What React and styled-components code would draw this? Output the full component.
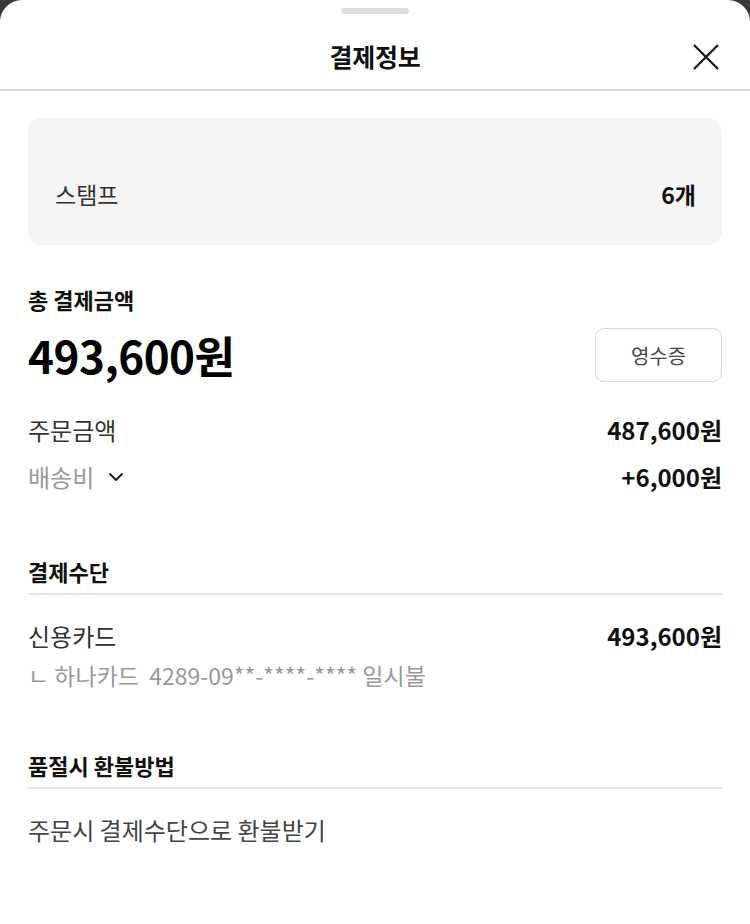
import React from "react";
import styled, { createGlobalStyle } from "styled-components";

const Global = createGlobalStyle`
  html, body { margin: 0; padding: 0; background: #3a3a3a; }
  body { font-family: "Noto Sans CJK KR", "Noto Sans", sans-serif; color: #111; }
  * { box-sizing: border-box; }
`;

const Sheet = styled.div`
  background: #fff;
  border-radius: 22px 22px 0 0;
  min-height: 924px;
  overflow: hidden;
`;

const Handle = styled.div`
  width: 68px;
  height: 6px;
  border-radius: 3px;
  background: #dedede;
  margin: 8px auto 0;
`;

const Header = styled.header`
  position: relative;
  height: 77px;
  padding-top: 8px;
  display: flex;
  align-items: center;
  justify-content: center;
  border-bottom: 2px solid #d5d8db;
`;

const Title = styled.h1`
  margin: 0;
  font-size: 25px;
  font-weight: 700;
  letter-spacing: -0.3px;
  color: #111;
`;

const Close = styled.button`
  position: absolute;
  right: 30px;
  top: 29px;
  border: 0;
  background: none;
  padding: 0;
  width: 28px;
  height: 28px;
  display: flex;
  align-items: center;
  justify-content: center;
  cursor: pointer;
`;

const Body = styled.main`
  padding: 27px 28px 40px;
`;

const StampBox = styled.div`
  background: #f4f4f4;
  border-radius: 14px;
  padding: 62px 26px 37px 27px;
  display: flex;
  justify-content: space-between;
  align-items: center;
  font-size: 23px;
  line-height: 28px;
`;

const StampLabel = styled.span`
  color: #333;
`;

const StampValue = styled.span`
  font-weight: 700;
  color: #111;
`;

const Section = styled.section`
  margin-top: ${(p) => p.$top}px;
`;

const SectionTitle = styled.h2`
  margin: 0;
  font-size: 22px;
  font-weight: 700;
  color: #111;
  line-height: 28px;
  padding-bottom: ${(p) => (p.$lined ? "8px" : "0")};
  border-bottom: ${(p) => (p.$lined ? "2px solid #e6e6e6" : "none")};
`;

const TotalRow = styled.div`
  display: flex;
  justify-content: space-between;
  align-items: center;
  margin-top: 14px;
`;

const TotalAmount = styled.div`
  font-size: 44px;
  font-weight: 700;
  letter-spacing: -0.5px;
  color: #000;
  line-height: 56px;
`;

const ReceiptButton = styled.button`
  width: 127px;
  height: 54px;
  border: 1.5px solid #d6d6d6;
  border-radius: 9px;
  background: #fff;
  font-family: inherit;
  font-size: 20px;
  color: #444;
`;

const Rows = styled.div`
  display: flex;
  flex-direction: column;
  gap: ${(p) => p.$gap}px;
  margin-top: ${(p) => p.$top}px;
`;

const Row = styled.div`
  display: flex;
  justify-content: space-between;
  align-items: center;
  font-size: 24px;
  line-height: 30px;
`;

const Label = styled.span`
  color: ${(p) => (p.$muted ? "#999" : "#333")};
  display: flex;
  align-items: center;
  gap: 14px;
`;

const Value = styled.span`
  font-weight: 700;
  color: #111;
`;

const SubText = styled.div`
  font-size: 23px;
  color: #999;
  line-height: 28px;
  white-space: pre;
`;

const Plain = styled.div`
  font-size: 24px;
  color: #444;
  line-height: 30px;
  margin-top: 26px;
`;

const Chevron = () => (
  <svg width="16" height="10" viewBox="0 0 16 10" fill="none">
    <path d="M2 2l6 6 6-6" stroke="#222" strokeWidth="2" strokeLinecap="round" strokeLinejoin="round" />
  </svg>
);

const XIcon = () => (
  <svg width="28" height="28" viewBox="0 0 28 28" fill="none">
    <path d="M2 2l24 24M26 2L2 26" stroke="#111" strokeWidth="2.2" />
  </svg>
);

export default function App() {
  return (
    <>
      <Global />
      <Sheet>
        <Handle />
        <Header>
          <Title>결제정보</Title>
          <Close aria-label="닫기"><XIcon /></Close>
        </Header>
        <Body>
          <StampBox>
            <StampLabel>스탬프</StampLabel>
            <StampValue>6개</StampValue>
          </StampBox>

          <Section $top={40}>
            <SectionTitle>총 결제금액</SectionTitle>
            <TotalRow>
              <TotalAmount>493,600원</TotalAmount>
              <ReceiptButton>영수증</ReceiptButton>
            </TotalRow>
            <Rows $gap={17} $top={32}>
              <Row>
                <Label>주문금액</Label>
                <Value>487,600원</Value>
              </Row>
              <Row>
                <Label $muted>배송비 <Chevron /></Label>
                <Value>+6,000원</Value>
              </Row>
            </Rows>
          </Section>

          <Section $top={65}>
            <SectionTitle $lined>결제수단</SectionTitle>
            <Rows $gap={10} $top={26}>
              <Row>
                <Label>신용카드</Label>
                <Value>493,600원</Value>
              </Row>
              <SubText>{"ㄴ 하나카드  4289-09**-****-**** 일시불"}</SubText>
            </Rows>
          </Section>

          <Section $top={62}>
            <SectionTitle $lined>품절시 환불방법</SectionTitle>
            <Plain>주문시 결제수단으로 환불받기</Plain>
          </Section>
        </Body>
      </Sheet>
    </>
  );
}
